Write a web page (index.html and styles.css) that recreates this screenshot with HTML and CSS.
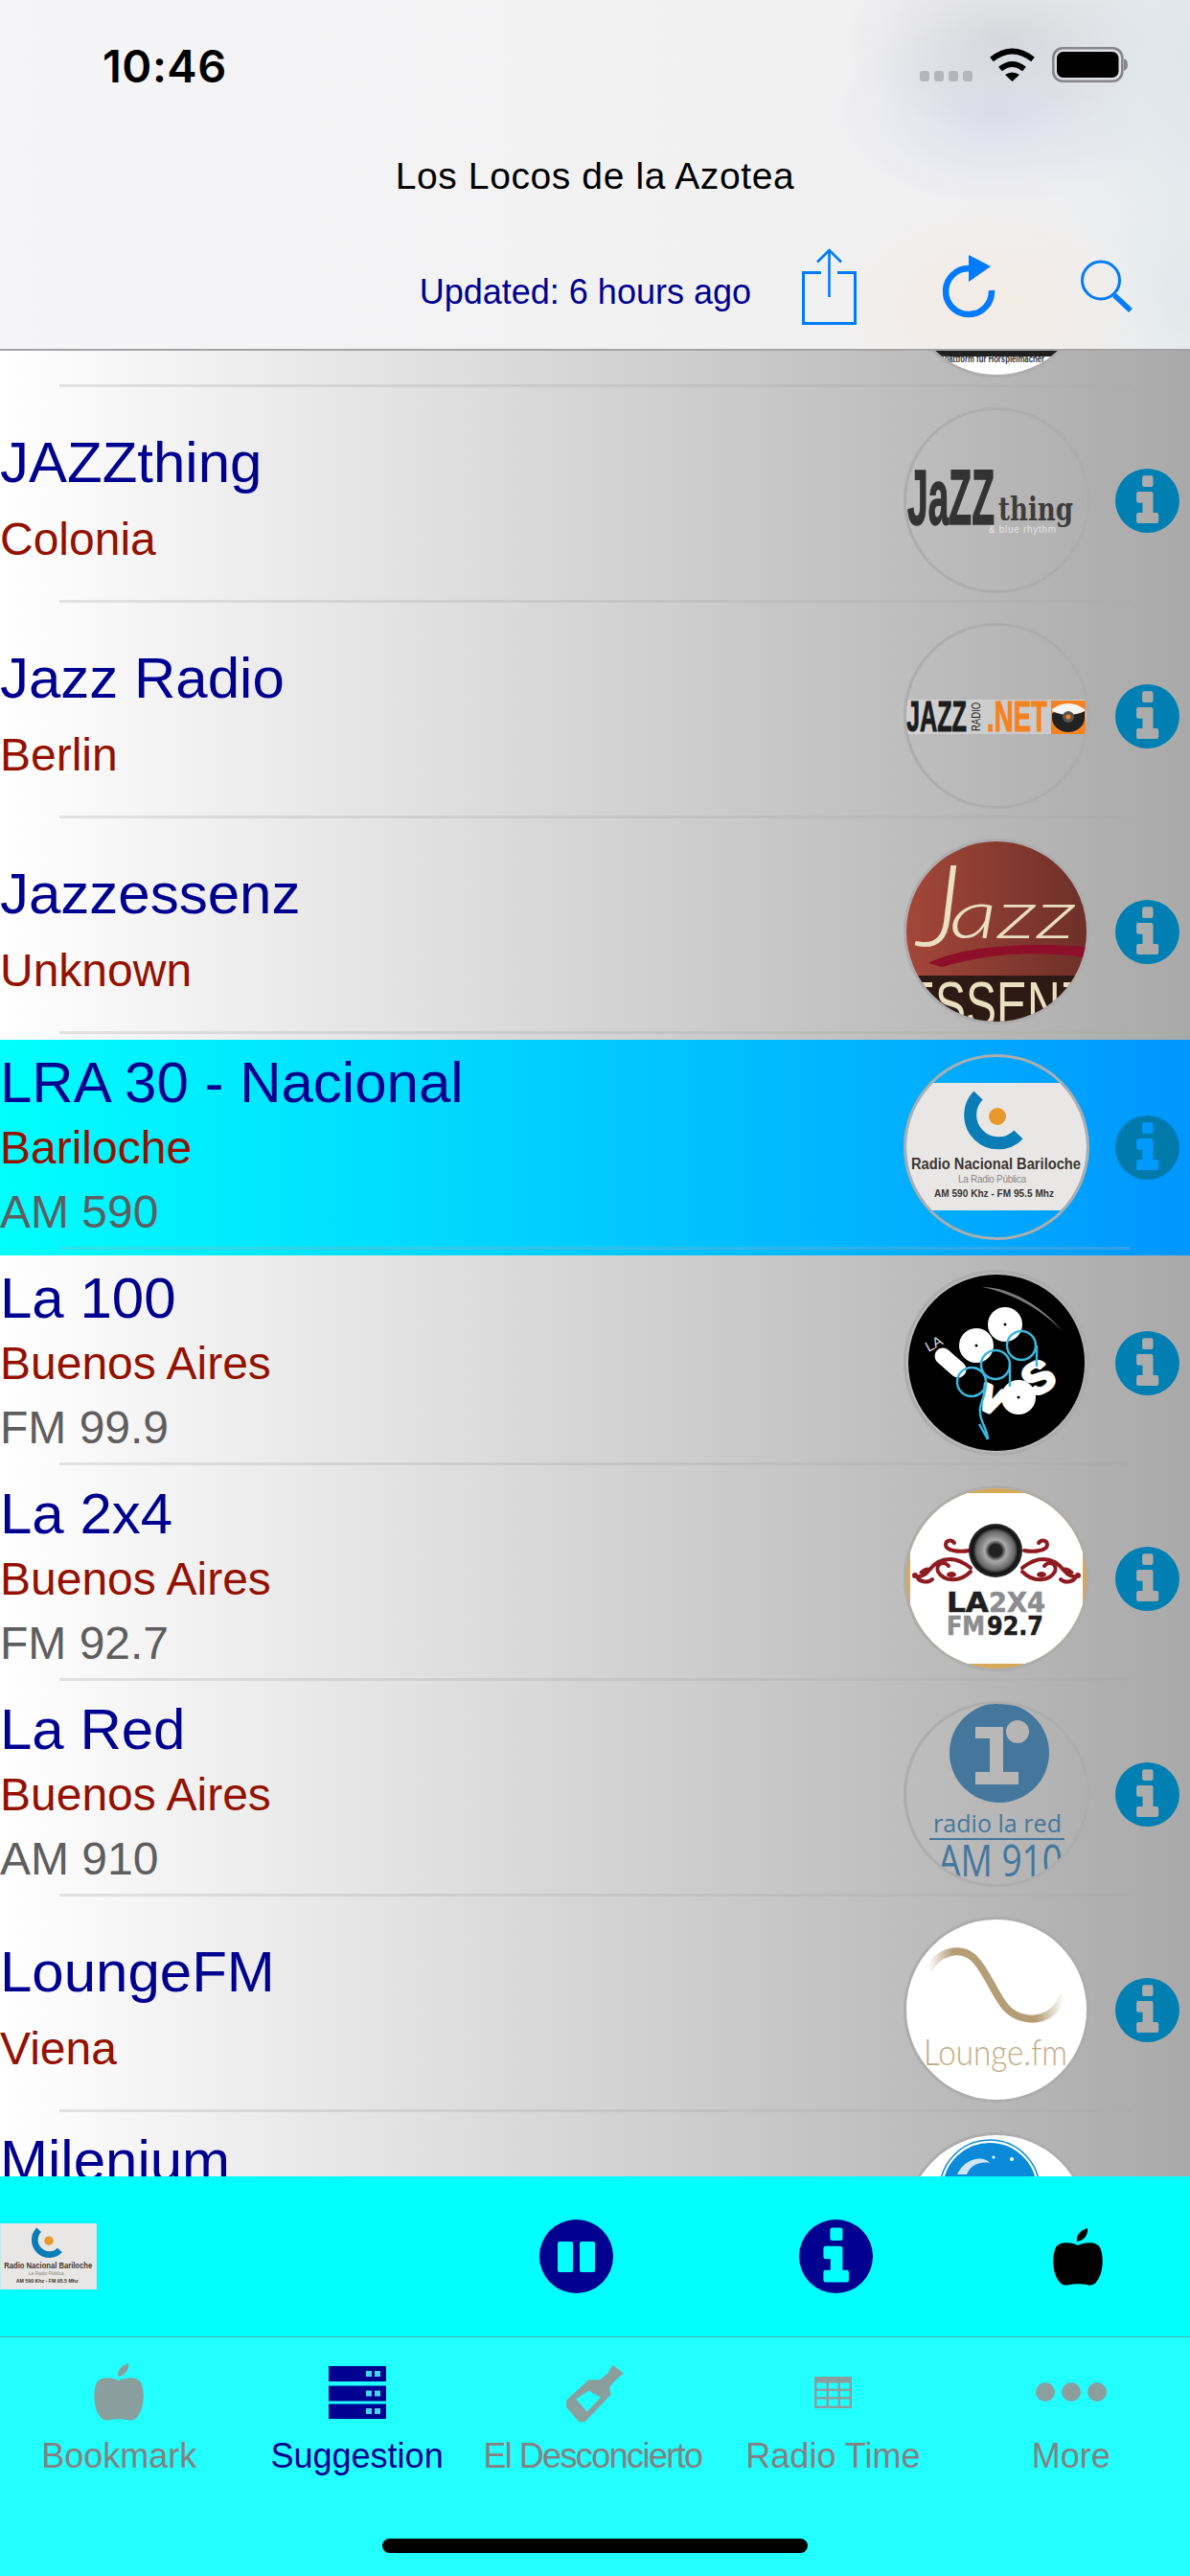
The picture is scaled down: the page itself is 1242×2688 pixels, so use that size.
FILE: index.html
```html
<!DOCTYPE html>
<html lang="en">
<head>
    <meta charset="UTF-8">
    <meta name="viewport" content="width=device-width, initial-scale=1.0">
    <title>Los Locos de la Azotea</title>
    <link rel="stylesheet" href="styles.css">
</head>
<body>
    <!-- shared icons -->
    <svg class="defs" aria-hidden="true">
        <defs>
            <symbol id="i-info" viewBox="0 0 200 200">
                <path fill="currentColor" fill-rule="evenodd" d="M100 0a100 100 0 1 0 0 200a100 100 0 1 0 0-200Z M90 22h22a6 6 0 0 1 6 6v23a6 6 0 0 1-6 6H90a6 6 0 0 1-6-6V28a6 6 0 0 1 6-6Z M72 72h40a6 6 0 0 1 6 6v59h11a6 6 0 0 1 6 6v21a6 6 0 0 1-6 6H72a6 6 0 0 1-6-6v-21a6 6 0 0 1 6-6h13v-30H72a6 6 0 0 1-6-6V78a6 6 0 0 1 6-6Z"/>
            </symbol>
            <symbol id="i-apple" viewBox="0 0 52 60">
                <path fill="currentColor" d="M26 18C20 15 8 13 3 20C-1 28 -1 46 6 55C9 60 13 60 17 59C21 58 31 58 35 59C39 60 43 60 46 55C53 46 53 28 49 20C44 13 32 15 26 18Z"/>
                <path fill="currentColor" d="M25 14C24 7 29 2 36 0C37 6 33 13 25 14Z"/>
            </symbol>
            <symbol id="nacional-art" viewBox="0 30 194 133">
                <rect x="0" y="30" width="194" height="133" fill="#e9e7e5"/>
                <path d="M78 43A28 28 0 1 0 120 84" fill="none" stroke="#0b7db6" stroke-width="13"/>
                <circle cx="98" cy="65" r="9" fill="#e79a2b"/>
                <text x="8" y="120" class="logo-text" font-size="16" font-weight="700" fill="#3c3530" textLength="177" lengthAdjust="spacingAndGlyphs">Radio Nacional Bariloche</text>
                <text x="57" y="134" class="logo-text" font-size="10" fill="#8a8684" textLength="71">La Radio Pública</text>
                <text x="32" y="149" class="logo-text" font-size="11" font-weight="700" fill="#38322e" textLength="125" lengthAdjust="spacingAndGlyphs">AM 590 Khz - FM 95.5 Mhz</text>
            </symbol>
            <linearGradient id="wave-fade" x1="26" y1="0" x2="167" y2="0" gradientUnits="userSpaceOnUse">
                <stop offset="0" stop-color="#b59e75" stop-opacity="0"/>
                <stop offset=".18" stop-color="#b59e75"/>
                <stop offset=".8" stop-color="#b59e75"/>
                <stop offset="1" stop-color="#b59e75" stop-opacity="0"/>
            </linearGradient>
            <linearGradient id="jazz-red" x1="0" y1="0" x2="1" y2="0">
                <stop offset="0" stop-color="#a5473a"/>
                <stop offset="1" stop-color="#6c2f27"/>
            </linearGradient>
            <radialGradient id="speaker-cone">
                <stop offset=".25" stop-color="#333"/>
                <stop offset=".4" stop-color="#aaa"/>
                <stop offset=".72" stop-color="#666"/>
                <stop offset=".85" stop-color="#111"/>
                <stop offset="1" stop-color="#2a2a2a"/>
            </radialGradient>
            <g id="scroll">
                <path d="M70 90C58 102 42 100 36 90C33 82 42 78 47 84M70 86C60 78 48 74 36 80C26 86 26 94 16 95M30 98C26 102 18 101 15 97M68 68C58 70 44 68 44 62C44 57 50 56 53 60" fill="none" stroke="#8e1b1f" stroke-width="4" stroke-linecap="round"/>
                <ellipse cx="22" cy="89" rx="6" ry="2.500" fill="#8e1b1f" transform="rotate(-25 22 89)"/>
                <ellipse cx="50" cy="93" rx="5" ry="3" fill="#8e1b1f"/>
                <circle cx="12" cy="94" r="3" fill="#8e1b1f"/>
            </g>
        </defs>
    </svg>

    <header class="nav">
        <div class="status">
            <span class="clock">10:46</span>
            <div class="status-icons">
                <div class="signal"><i></i><i></i><i></i><i></i></div>
                <svg class="wifi" width="49" height="36" viewBox="0 0 49 36">
                    <path d="M3 13Q24.500 -4 46 13M12 23Q24.500 13 37 23" fill="none" stroke="#000" stroke-width="6"/>
                    <path d="M17 29Q24.500 24 32 29L24.500 36Z"/>
                </svg>
                <svg class="battery" width="79" height="37" viewBox="0 0 79 37">
                    <rect x="1.300" y="1.300" width="72" height="34.400" rx="10" fill="none" stroke="#85858b" stroke-width="2.600"/>
                    <rect x="5" y="5" width="64.500" height="27" rx="6.500"/>
                    <path d="M75 12C77.500 13 79 15 79 18.500C79 22 77.500 24 75 25Z" fill="#85858b"/>
                </svg>
            </div>
        </div>
        <h1 class="nav-title">Los Locos de la Azotea</h1>
        <div class="toolbar">
            <span class="updated">Updated: 6 hours ago</span>
            <svg class="tool-share" width="57" height="80" viewBox="0 0 57 80" fill="none" stroke="#007aff">
                <path d="M20 25.500H1.500V78.500H55.500V25.500H37" stroke-width="3"/>
                <path d="M28.500 2V51M16 14.500L28.500 2L41 14.500" stroke-width="2.600"/>
            </svg>
            <svg class="tool-refresh" width="56" height="68" viewBox="0 0 56 68">
                <path d="M51 38A24 24 0 1 1 27 15" fill="none" stroke="#007aff" stroke-width="6.500"/>
                <path d="M27 1L50 13L27 29Z" fill="#007aff"/>
            </svg>
            <svg class="tool-search" width="56" height="56" viewBox="0 0 56 56" fill="none" stroke="#007aff">
                <circle cx="21" cy="21.500" r="19.500" stroke-width="3"/>
                <path d="M35 37L52 53" stroke-width="5.500"/>
            </svg>
        </div>
    </header>

    <main class="list">
        <div class="rows">
            <!-- scrolled off the top, only the logo shows -->
            <div class="row">
                <div class="row-body two">
                    <div class="row-text"></div>
                    <div class="logo">
                        <svg viewBox="3 3 188 188">
                            <rect width="194" height="194" fill="#fff"/>
                            <rect width="194" height="172" fill="#1f1f1f"/>
                            <text x="40" y="178" class="logo-text" font-size="10" font-weight="700" fill="#333" textLength="107" lengthAdjust="spacingAndGlyphs">Plattform für Hörspielmacher</text>
                        </svg>
                    </div>
                    <svg class="info"><use href="#i-info"/></svg>
                </div>
                <div class="sep"></div>
            </div>

            <div class="row">
                <div class="row-body two">
                    <div class="row-text">
                        <div class="name">JAZZthing</div>
                        <div class="place">Colonia</div>
                    </div>
                    <div class="logo">
                        <svg viewBox="3 3 188 188">
                            <text x="4" y="122" class="logo-text" font-size="82" font-weight="700" fill="#333" stroke="#333" stroke-width="1.500" textLength="91" lengthAdjust="spacingAndGlyphs">JaZZ</text>
                            <text x="99" y="118" class="logo-slab" font-size="33" font-weight="700" fill="#3d3d3d" textLength="78" lengthAdjust="spacingAndGlyphs">thing</text>
                            <text x="89" y="131" class="logo-text" font-size="10" fill="#e4e4e4" textLength="70">&amp; blue rhythm</text>
                        </svg>
                    </div>
                    <svg class="info"><use href="#i-info"/></svg>
                </div>
                <div class="sep"></div>
            </div>

            <div class="row">
                <div class="row-body two">
                    <div class="row-text">
                        <div class="name">Jazz Radio</div>
                        <div class="place">Berlin</div>
                    </div>
                    <div class="logo">
                        <svg viewBox="3 3 188 188">
                            <rect x="2" y="80" width="190" height="36" fill="#fff" opacity=".3"/>
                            <text x="3" y="113" class="logo-text" font-size="45" font-weight="700" fill="#1c1c1c" stroke="#1c1c1c" textLength="63" lengthAdjust="spacingAndGlyphs">JAZZ</text>
                            <text transform="translate(80 113) rotate(-90)" class="logo-text" font-size="13" fill="#1c1c1c" textLength="30" lengthAdjust="spacingAndGlyphs">RADIO</text>
                            <text x="87" y="113" class="logo-text" font-size="45" font-weight="700" fill="#f58220" stroke="#f58220" textLength="63" lengthAdjust="spacingAndGlyphs">.NET</text>
                            <rect x="154" y="81" width="36" height="35" fill="#f58220"/>
                            <path d="M155 95Q162 88 172 93Q182 97 189 92V99A17 15 0 0 1 155 99Z" fill="#222"/>
                            <path d="M155 90Q172 78 189 90V92Q172 100 155 92Z" fill="#f4f4f4"/>
                            <circle cx="172" cy="98" r="6" fill="#555"/>
                            <circle cx="172" cy="98" r="2.500" fill="#f58220"/>
                        </svg>
                    </div>
                    <svg class="info"><use href="#i-info"/></svg>
                </div>
                <div class="sep"></div>
            </div>

            <div class="row">
                <div class="row-body two">
                    <div class="row-text">
                        <div class="name">Jazzessenz</div>
                        <div class="place">Unknown</div>
                    </div>
                    <div class="logo">
                        <svg viewBox="3 3 188 188">
                            <rect width="194" height="143" fill="url(#jazz-red)"/>
                            <rect y="143" width="194" height="51" fill="#2e1a14"/>
                            <text x="14" y="112" class="logo-script" font-size="118" fill="#eadfc0">J</text>
                            <text x="48" y="104" class="logo-script" font-size="72" fill="#eadfc0" textLength="132" lengthAdjust="spacingAndGlyphs">azz</text>
                            <path d="M26 130C60 112 130 108 190 113V124C130 116 80 122 40 134Z" fill="#8e0f2a"/>
                            <text x="97" y="196" text-anchor="middle" class="logo-text" font-size="66" fill="#eadfc0" textLength="192" lengthAdjust="spacingAndGlyphs">ESSENZ</text>
                        </svg>
                    </div>
                    <svg class="info"><use href="#i-info"/></svg>
                </div>
                <div class="sep"></div>
            </div>

            <div class="row selected">
                <div class="row-body">
                    <div class="row-text">
                        <div class="name">LRA 30 - Nacional</div>
                        <div class="place">Bariloche</div>
                        <div class="freq">AM 590</div>
                    </div>
                    <div class="logo">
                        <svg viewBox="3 3 188 188">
                            <use href="#nacional-art" x="0" y="30" width="194" height="133"/>
                        </svg>
                    </div>
                    <svg class="info"><use href="#i-info"/></svg>
                </div>
                <div class="sep"></div>
            </div>

            <div class="row">
                <div class="row-body">
                    <div class="row-text">
                        <div class="name">La 100</div>
                        <div class="place">Buenos Aires</div>
                        <div class="freq">FM 99.9</div>
                    </div>
                    <div class="logo">
                        <svg viewBox="3 3 188 188">
                            <circle cx="97" cy="97" r="92" fill="#000"/>
                            <path d="M82 18C112 18 144 38 166 64C144 42 118 26 82 18Z" fill="#7a7a7a"/>
                            <text transform="translate(26 86) rotate(-28)" class="logo-text" font-size="15" fill="#ddd">LA</text>
                            <path d="M41 90L57 104" stroke="#fff" stroke-width="17" stroke-linecap="round"/>
                            <circle cx="76" cy="79" r="18" fill="#fff"/>
                            <circle cx="106" cy="57" r="18" fill="#fff"/>
                            <circle cx="120" cy="133" r="18" fill="#fff"/>
                            <circle cx="76" cy="79" r="1.500"/>
                            <circle cx="106" cy="57" r="1.500"/>
                            <circle cx="120" cy="133" r="1.500"/>
                            <text transform="translate(136 134) rotate(-32)" class="logo-text" font-size="46" font-weight="700" fill="#fff" stroke="#fff" stroke-width="3" stroke-linejoin="round">S</text>
                            <text transform="translate(76 142) rotate(24)" class="logo-text" font-size="36" font-weight="700" fill="#fff" stroke="#fff" stroke-width="5" stroke-linejoin="round">V</text>
                            <g fill="none" stroke="#3bb7de" stroke-width="2.500">
                                <circle cx="123" cy="79" r="15"/>
                                <circle cx="96" cy="99" r="15"/>
                                <circle cx="71" cy="117" r="15"/>
                                <path d="M139 79L139 101M111 99V122M86 117C86 135 78 140 80 150C81 160 88 168 88 177M79 161L88 177"/>
                            </g>
                        </svg>
                    </div>
                    <svg class="info"><use href="#i-info"/></svg>
                </div>
                <div class="sep"></div>
            </div>

            <div class="row">
                <div class="row-body">
                    <div class="row-text">
                        <div class="name">La 2x4</div>
                        <div class="place">Buenos Aires</div>
                        <div class="freq">FM 92.7</div>
                    </div>
                    <div class="logo">
                        <svg viewBox="3 3 188 188">
                            <rect width="194" height="194" fill="#d6a95a"/>
                            <path d="M7 20Q30 8 60 8H134Q164 8 187 20V174Q164 186 134 186H60Q30 186 7 174Z" fill="#fff"/>
                            <use href="#scroll"/>
                            <use href="#scroll" transform="translate(194 0) scale(-1 1)"/>
                            <circle cx="96" cy="68" r="28" fill="url(#speaker-cone)"/>
                            <circle cx="96" cy="68" r="7" fill="#222"/>
                            <text x="45" y="132" class="logo-wide" font-size="29" font-weight="700" fill="#1e1e1e" stroke="#1e1e1e" stroke-width=".6" textLength="44" lengthAdjust="spacingAndGlyphs">LA</text>
                            <text x="89" y="132" class="logo-wide" font-size="29" font-weight="700" fill="#8c8d91" stroke="#8c8d91" stroke-width=".6" textLength="59" lengthAdjust="spacingAndGlyphs">2X4</text>
                            <text x="45" y="156" class="logo-wide" font-size="26" font-weight="700" fill="#8c8d91" stroke="#8c8d91" stroke-width=".6" textLength="40" lengthAdjust="spacingAndGlyphs">FM</text>
                            <text x="87" y="156" class="logo-wide" font-size="26" font-weight="700" fill="#1e1e1e" stroke="#1e1e1e" stroke-width=".6" textLength="59" lengthAdjust="spacingAndGlyphs">92.7</text>
                        </svg>
                    </div>
                    <svg class="info"><use href="#i-info"/></svg>
                </div>
                <div class="sep"></div>
            </div>

            <div class="row">
                <div class="row-body">
                    <div class="row-text">
                        <div class="name">La Red</div>
                        <div class="place">Buenos Aires</div>
                        <div class="freq">AM 910</div>
                    </div>
                    <div class="logo">
                        <svg viewBox="3 3 188 188">
                            <path fill="#45779c" fill-rule="evenodd" d="M100 2a52 52 0 1 0 0 104a52 52 0 1 0 0-104Z M75 27H104V74H120V87H75V74H90V39H75Z M119 20a12 12 0 1 0 0 24a12 12 0 1 0 0-24Z"/>
                            <text x="31" y="137" class="logo-open" font-size="25" fill="#45779c" textLength="134">radio la red</text>
                            <rect x="27" y="143" width="141" height="2" fill="#45779c"/>
                            <text x="36" y="183" class="logo-open" font-size="46" fill="#45779c" textLength="130" lengthAdjust="spacingAndGlyphs">AM 910</text>
                        </svg>
                    </div>
                    <svg class="info"><use href="#i-info"/></svg>
                </div>
                <div class="sep"></div>
            </div>

            <div class="row">
                <div class="row-body two">
                    <div class="row-text">
                        <div class="name">LoungeFM</div>
                        <div class="place">Viena</div>
                    </div>
                    <div class="logo">
                        <svg viewBox="3 3 188 188">
                            <rect width="194" height="194" fill="#fff"/>
                            <path d="M26 56C36 36 60 30 74 44C88 58 96 84 108 96C124 112 156 112 167 82" fill="none" stroke="url(#wave-fade)" stroke-width="8"/>
                            <text x="21" y="155" class="logo-lato" font-size="37" fill="#c3ab82" textLength="150" lengthAdjust="spacingAndGlyphs">Lounge.fm</text>
                        </svg>
                    </div>
                    <svg class="info"><use href="#i-info"/></svg>
                </div>
                <div class="sep"></div>
            </div>

            <div class="row">
                <div class="row-body">
                    <div class="row-text">
                        <div class="name">Milenium</div>
                    </div>
                    <div class="logo">
                        <svg viewBox="3 3 188 188">
                            <rect width="194" height="194" fill="#fff"/>
                            <circle cx="90" cy="60" r="50" fill="#0a8ad8" stroke="#fff" stroke-width="2"/>
                            <circle cx="90" cy="60" r="52" fill="none" stroke="#0a8ad8" stroke-width="1.500"/>
                            <path d="M56 44C64 26 84 24 90 32C80 30 70 34 66 44Z" fill="#cfe6f6"/>
                            <circle cx="113" cy="28" r="2" fill="#fff"/>
                            <circle cx="94" cy="26" r="1.500" fill="#fff"/>
                        </svg>
                    </div>
                    <svg class="info"><use href="#i-info"/></svg>
                </div>
                <div class="sep"></div>
            </div>
        </div>
    </main>

    <section class="player">
        <svg class="player-thumb" width="101" height="69"><use href="#nacional-art"/></svg>
        <svg class="player-pause" width="77" height="77" viewBox="0 0 77 77">
            <circle cx="38.500" cy="38.500" r="38.500" fill="#000090"/>
            <rect x="19" y="23" width="16" height="32" rx="2" fill="#0ff"/>
            <rect x="42" y="23" width="16" height="32" rx="2" fill="#0ff"/>
        </svg>
        <svg class="player-info"><use href="#i-info"/></svg>
        <svg class="player-apple"><use href="#i-apple"/></svg>
    </section>

    <nav class="tabs">
        <div class="tab">
            <div class="tab-icon"><svg class="apple-small"><use href="#i-apple"/></svg></div>
            <span>Bookmark</span>
        </div>
        <div class="tab active">
            <div class="tab-icon">
                <svg width="60" height="55" viewBox="0 0 60 55">
                    <rect width="60" height="16" fill="#000090"/>
                    <rect y="20.500" width="60" height="16" fill="#000090"/>
                    <rect y="39.500" width="60" height="15.500" fill="#000090"/>
                    <g fill="#3fd8f0">
                        <rect x="39" y="5" width="6" height="6"/><rect x="48" y="5" width="6" height="6"/>
                        <rect x="39" y="25.500" width="6" height="6"/><rect x="48" y="25.500" width="6" height="6"/>
                        <rect x="39" y="44" width="6" height="6"/><rect x="48" y="44" width="6" height="6"/>
                    </g>
                </svg>
            </div>
            <span>Suggestion</span>
        </div>
        <div class="tab">
            <div class="tab-icon">
                <svg width="60" height="63" viewBox="60 40 180 190">
                    <path fill="#8a9e9e" fill-rule="evenodd" d="M205 48L240 75L216 95L196 118L200 142L118 228H100L60 182V160L130 95H165L190 75Z M130 130L168 150L125 195L90 155Z"/>
                </svg>
            </div>
            <span class="tight">El Desconcierto</span>
        </div>
        <div class="tab">
            <div class="tab-icon">
                <svg width="39" height="33" viewBox="0 0 39 33">
                    <rect width="39" height="33" fill="#8a9e9e"/>
                    <g fill="#20ffff">
                        <rect x="2.500" y="6.500" width="10" height="6"/><rect x="15" y="6.500" width="9.500" height="6"/><rect x="27" y="6.500" width="9.500" height="6"/>
                        <rect x="2.500" y="15" width="10" height="6"/><rect x="15" y="15" width="9.500" height="6"/><rect x="27" y="15" width="9.500" height="6"/>
                        <rect x="2.500" y="23.500" width="10" height="7"/><rect x="15" y="23.500" width="9.500" height="7"/><rect x="27" y="23.500" width="9.500" height="7"/>
                    </g>
                </svg>
            </div>
            <span>Radio Time</span>
        </div>
        <div class="tab">
            <div class="tab-icon">
                <div class="dots"><i></i><i></i><i></i></div>
            </div>
            <span>More</span>
        </div>
        <div class="home-bar"></div>
    </nav>
</body>
</html>
```

FILE: styles.css
```css
* {
    box-sizing: border-box;
}
html, body {
    margin: 0;
    padding: 0;
}
body {
    width: 1242px;
    height: 2688px;
    overflow: hidden;
    display: flex;
    flex-direction: column;
    font-family: "Liberation Sans", Arial, sans-serif;
    background-color: #fff;
}
svg {
    display: block;
    flex-shrink: 0;
}
.defs {
    width: 0;
    height: 0;
}

/* top bar */
.nav {
    height: 366px;
    flex-shrink: 0;
    padding-top: 49px;
    border-bottom: 2px solid #a4a4a4;
    background:
        radial-gradient(ellipse 170px 100px at 1050px 40px, rgba(210,211,216,.8), rgba(210,211,216,0)),
        radial-gradient(ellipse 170px 100px at 1040px 115px, rgba(216,218,236,.85), rgba(216,218,236,0)),
        radial-gradient(ellipse 190px 280px at 1260px 60px, rgba(218,229,234,.95), rgba(218,229,234,0)),
        radial-gradient(ellipse 170px 110px at 1030px 320px, rgba(244,234,226,.9), rgba(244,234,226,0)),
        radial-gradient(ellipse 110px 130px at 1242px 320px, rgba(224,232,234,.9), rgba(224,232,234,0)),
        linear-gradient(90deg, #f5f4f6, #f1f1f2 60%, #efeff0);
}
.status {
    display: flex;
    justify-content: space-between;
    height: 37px;
    padding: 0 65px 0 107px;
}
.clock {
    font-family: Inter, "Liberation Sans", sans-serif;
    font-size: 47px;
    font-weight: 600;
    line-height: 37px;
    margin-top: 1px;
    letter-spacing: .5px;
}
.status-icons {
    display: flex;
    align-items: flex-end;
}
.signal {
    display: flex;
    gap: 5px;
    margin-bottom: 1px;
    margin-right: 17px;
}
.signal i {
    width: 10px;
    height: 11px;
    border-radius: 3px;
    background-color: #b5b6bc;
}
.wifi {
    margin-right: 17px;
    margin-bottom: 1px;
}
.nav-title {
    margin: 76px 0 0;
    font-size: 39px;
    font-weight: normal;
    line-height: 44px;
    letter-spacing: .6px;
    text-align: center;
    color: #000;
}
.toolbar {
    display: flex;
    align-items: center;
    justify-content: flex-end;
    height: 80px;
    margin-top: 53px;
    padding-right: 58px;
}
.updated {
    font-size: 36px;
    color: #000090;
    margin-right: 53px;
    margin-top: 12px;
}
.tool-share {
    margin-right: 90px;
}
.tool-refresh {
    margin-right: 88px;
}

/* station list */
.list {
    height: 1905px;
    flex-shrink: 0;
    overflow: hidden;
}
.rows {
    margin-top: -181px;
}
.row {
    height: 225px;
    background: linear-gradient(90deg, #fff, #a9a9a9);
}
.row.selected {
    background: linear-gradient(90deg, #0ff, #0096ff);
}
.row-body {
    display: flex;
    height: 216px;
}
.row-text {
    flex: 1;
    min-width: 0;
    padding-top: 10px;
}
.two .row-text {
    padding-top: 38px;
}
.name {
    font-size: 60px;
    line-height: 70px;
    color: #000090;
    white-space: nowrap;
}
.place {
    font-size: 48px;
    line-height: 66px;
    color: #941100;
}
.two .place {
    margin-top: 12px;
}
.freq {
    font-size: 48px;
    line-height: 68px;
    color: #5e5e5e;
}
.logo {
    width: 194px;
    height: 194px;
    margin-top: 15px;
    border: 3px solid #adadad;
    border-radius: 50%;
    overflow: hidden;
    flex-shrink: 0;
}
.logo svg {
    width: 188px;
    height: 188px;
}
.logo-text {
    font-family: "Liberation Sans", sans-serif;
}
.logo-slab {
    font-family: "DejaVu Serif", serif;
}
.logo-script {
    font-family: Lato, sans-serif;
    font-style: italic;
    font-weight: 300;
}
.logo-wide {
    font-family: "DejaVu Sans", sans-serif;
}
.logo-open {
    font-family: "Open Sans", sans-serif;
}
.logo-lato {
    font-family: Lato, sans-serif;
    font-weight: 300;
}
.info {
    width: 67px;
    height: 67px;
    margin: 79px 11px 0 27px;
    color: #007fb3;
}
.selected .info {
    color: #0079ab;
}
.sep {
    height: 3px;
    margin: 0 62px;
    background-color: rgba(169,169,169,.3);
}

/* now playing */
.player {
    display: flex;
    align-items: center;
    height: 167px;
    flex-shrink: 0;
    background-color: #0ff;
}
.player-pause {
    margin-left: 462px;
}
.player-info {
    width: 77px;
    height: 77px;
    margin-left: 194px;
    color: #000090;
}
.player-apple {
    width: 52px;
    height: 60px;
    margin-left: 188px;
    color: #000;
}

/* tab bar */
.tabs {
    flex: 1;
    position: relative;
    display: grid;
    grid-template-columns: repeat(5, 1fr);
    padding-top: 27px;
    border-top: 1px solid #4db3b3;
    background-color: #21ffff;
}
.tab {
    display: flex;
    flex-direction: column;
    align-items: center;
    color: #858080;
}
.tab.active {
    color: #000090;
}
.tab-icon {
    display: flex;
    align-items: center;
    justify-content: center;
    height: 60px;
    margin-bottom: 15px;
}
.tab span {
    font-size: 36px;
    line-height: 44px;
    white-space: nowrap;
}
.tab .tight {
    letter-spacing: -1.6px;
    margin-right: 5px;
}
.apple-small {
    width: 52px;
    height: 60px;
    color: #8a9e9e;
}
.dots {
    display: flex;
    gap: 7px;
}
.dots i {
    width: 20px;
    height: 20px;
    border-radius: 50%;
    background-color: #8a9e9e;
}
.home-bar {
    position: absolute;
    left: 399px;
    top: 210px;
    width: 444px;
    height: 15px;
    border-radius: 8px;
    background-color: #000;
}
```
